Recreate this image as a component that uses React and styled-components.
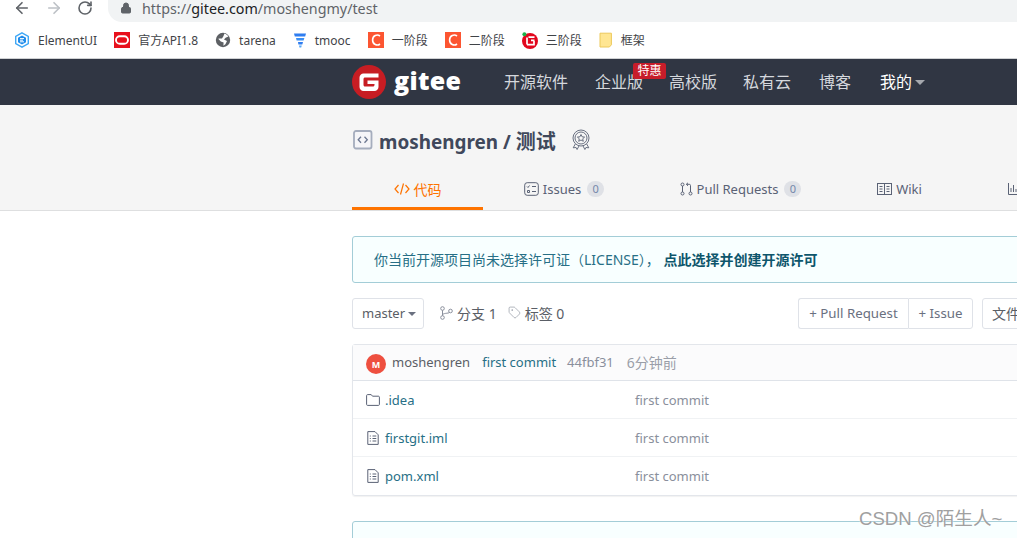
import React from "react";
import styled, { createGlobalStyle } from "styled-components";
import { ArrowLeft, ArrowRight, RotateCw, Lock, Tag } from "lucide-react";

const FONT = `"Noto Sans", "Noto Sans CJK SC", sans-serif`;

const Global = createGlobalStyle`
  html, body { margin: 0; padding: 0; background: #fff; }
  body { font-family: ${FONT}; overflow: hidden; }
  * { box-sizing: border-box; }
`;

const Page = styled.div`
  position: relative;
  width: 1017px;
  height: 538px;
  overflow: hidden;
  background: #fff;
`;

const Toolbar = styled.div`
  display: flex;
  align-items: center;
  height: 22px;
  padding: 0 0 6px 13px;
`;
const NavIcons = styled.div`
  display: flex;
  align-items: center;
  gap: 14px;
  width: 95px;
  flex: none;
  svg { display: block; }
`;
const UrlPill = styled.div`
  display: flex;
  align-items: center;
  flex: 1;
  height: 22px;
  margin-bottom: -6px;
  padding: 0 0 6px 12px;
  gap: 10px;
  background: #f1f3f4;
  border-radius: 0 0 0 14px;
`;
const UrlText = styled.div`
  font-size: 14.3px;
  line-height: 15px;
  color: #5f6368;
  white-space: nowrap;
  b { font-weight: 400; color: #202124; }
`;

const Bookmarks = styled.div`
  display: flex;
  align-items: center;
  height: 37px;
  padding-left: 14px;
  border-bottom: 1px solid #d0d2d4;
`;
const Bookmark = styled.div`
  display: flex;
  align-items: center;
  gap: 8px;
  margin-right: 17px;
  font-size: 12px;
  color: #3f4347;
  white-space: nowrap;
  svg { display: block; flex: none; }
`;

const TopNav = styled.nav`
  display: flex;
  align-items: center;
  height: 46px;
  padding-left: 352px;
  background: #303643;
`;
const LogoWord = styled.div`
  margin: 0 44px 0 8px;
  font-family: "Open Sans", sans-serif;
  font-size: 25px;
  line-height: 32px;
  font-weight: 800;
  color: #fff;
  letter-spacing: 0.3px;
  width: 66px;
  padding-bottom: 5px;
`;
const NavLinks = styled.div`
  display: flex;
  align-items: center;
  gap: 26px;
  padding-bottom: 2px;
`;
const NavLink = styled.a`
  position: relative;
  display: flex;
  align-items: center;
  gap: 3px;
  margin-left: ${(p) => p.$ml || 0}px;
  font-size: 16px;
  color: ${(p) => (p.$active ? "#fff" : "#d5d8dd")};
  white-space: nowrap;
`;
const Hot = styled.span`
  position: absolute;
  left: 38px;
  top: -6px;
  width: 33px;
  height: 16px;
  background: #c71d2a;
  border-radius: 2px;
  color: #fff;
  font-size: 12px;
  line-height: 16px;
  text-align: center;
`;
const Caret = styled.i`
  display: inline-block;
  width: 0;
  height: 0;
  border-left: ${(p) => p.$size || 5}px solid transparent;
  border-right: ${(p) => p.$size || 5}px solid transparent;
  border-top: ${(p) => p.$size || 5}px solid ${(p) => p.$color || "#a5a8ae"};
  margin-top: 2px;
`;

const RepoHeader = styled.header`
  height: 106px;
  padding: 22px 0 0 352px;
  background: #f5f5f5;
  border-bottom: 1px solid #dedfe0;
`;
const RepoTitle = styled.div`
  display: flex;
  align-items: center;
  height: 26px;
  gap: 6px;
  padding-left: 1px;
  font-size: 18.9px;
  font-weight: 700;
  color: #40485b;
  white-space: nowrap;
  svg { display: block; flex: none; }
`;
const TitleCjk = styled.span`
  font-size: 20px;
`;
const TitleBadge = styled.span`
  display: flex;
  margin-left: 9px;
`;
const Tabs = styled.div`
  display: flex;
  height: 57px;
`;
const TabItem = styled.a`
  display: flex;
  align-items: center;
  justify-content: center;
  gap: 4px;
  height: 57px;
  width: ${(p) => p.$w}px;
  flex: none;
  font-size: ${(p) => (p.$active ? 14 : 13)}px;
  padding-top: 17px;
  color: ${(p) => (p.$active ? "#fe7300" : "#5a6275")};
  border-bottom: 3px solid ${(p) => (p.$active ? "#fe7300" : "transparent")};
  white-space: nowrap;
  svg { display: block; flex: none; }
`;
const Count = styled.span`
  display: inline-block;
  width: 17px;
  height: 16px;
  margin-left: 2px;
  border-radius: 8px;
  background: #dfe1e6;
  color: #7488aa;
  font-size: 11px;
  line-height: 16px;
  text-align: center;
`;

const Main = styled.main`
  width: 1000px;
  margin-left: 352px;
  padding-top: 25px;
`;
const Alert = styled.div`
  height: 47px;
  padding: 0 0 1px 21px;
  display: flex;
  align-items: center;
  font-size: 14px;
  color: #276f86;
  white-space: nowrap;
  background: #f8ffff;
  border: 1px solid #a3cdd7;
  border-radius: 3px;
  b { font-weight: 700; color: #0e566c; }
`;
const Tools = styled.div`
  display: flex;
  align-items: center;
  margin-top: 15px;
  height: 31px;
`;
const ToolsLeft = styled.div`
  display: flex;
  align-items: center;
  width: 446px;
  flex: none;
`;
const Btn = styled.div`
  display: flex;
  align-items: center;
  gap: 3px;
  height: 31px;
  padding: 0 7px 2px 9px;
  font-size: 13px;
  color: #5a5e66;
  background: #fff;
  border: 1px solid #dfe2e8;
  border-radius: 3px;
  white-space: nowrap;
`;
const BtnGroup = styled.div`
  display: flex;
  margin-right: 9px;
  ${Btn} { justify-content: center; padding: 0 0 2px; color: #6a7080; font-size: 13.3px; }
  ${Btn}:first-child { width: 110px; border-radius: 3px 0 0 3px; border-right: 0; }
  ${Btn}:last-child { width: 65px; border-radius: 0 3px 3px 0; }
`;
const FileBtn = styled(Btn)`
  font-size: 14px;
`;
const Stat = styled.div`
  display: flex;
  align-items: center;
  gap: 4px;
  height: 31px;
  padding-bottom: 2px;
  margin-left: ${(p) => p.$ml}px;
  font-size: 14px;
  color: #5a5e66;
  white-space: nowrap;
  svg { display: block; }
`;

const FileBox = styled.section`
  margin-top: 15px;
  border: 1px solid #e3e6eb;
  border-radius: 3px;
  box-shadow: 0 1px 1px rgba(34, 36, 38, 0.06);
`;
const CommitRow = styled.div`
  display: flex;
  align-items: center;
  height: 36px;
  padding: 0 0 2px 13px;
  background: #fbfbfc;
  border-bottom: 1px solid #dfe3e9;
  font-size: 13px;
  white-space: nowrap;
`;
const Avatar = styled.span`
  width: 20px;
  height: 20px;
  margin: 4px 6px 0 0;
  border-radius: 50%;
  background: #ee4f3f;
  color: #fff;
  font-size: 9px;
  font-weight: 700;
  line-height: 21px;
  text-align: center;
`;
const CommitPart = styled.span`
  margin-right: ${(p) => p.$mr || 0}px;
  font-size: ${(p) => p.$size || 13}px;
  color: ${(p) => p.$color};
`;
const FileRow = styled.div`
  display: flex;
  align-items: center;
  height: 38px;
  padding-left: 13px;
  font-size: 13px;
  border-bottom: 1px solid #f0f2f4;
  &:last-child { border-bottom: 0; }
`;
const FileName = styled.a`
  display: flex;
  align-items: center;
  gap: 5px;
  width: 269px;
  flex: none;
  color: #276f86;
  svg { display: block; flex: none; }
`;
const FileMsg = styled.span`
  color: #8a8f9c;
`;
const AlertLower = styled(Alert)`
  margin-top: 25px;
`;

const Watermark = styled.div`
  position: absolute;
  left: 859px;
  top: 506px;
  font-family: "Liberation Sans", "Noto Sans CJK SC", sans-serif;
  font-size: 18.6px;
  line-height: 26px;
  color: #a0a0a0;
  white-space: nowrap;
  text-shadow: 0 0 2px #fff;
`;

const ElementIcon = () => (
  <svg width="16" height="16" viewBox="0 0 16 16">
    <path d="M8 .8 14.300 4.400v7.200L8 15.200 1.700 11.600V4.400z" fill="#fff" stroke="#3fa7f5" strokeWidth="1.400" />
    <path d="M8 3.400 12 5.700v4.600L8 12.600 4 10.300V5.700z" fill="#1f8ceb" />
    <path d="M6 6.600h4M6 8.200h3M6 9.800h4" stroke="#fff" strokeWidth="1" />
  </svg>
);
const OracleIcon = () => (
  <svg width="16" height="16" viewBox="0 0 16 16">
    <rect width="16" height="16" fill="#e8101c" />
    <rect x="2" y="4.200" width="12" height="7.600" rx="3.800" fill="none" stroke="#fff" strokeWidth="1.900" />
  </svg>
);
const GlobeIcon = () => (
  <svg width="16" height="16" viewBox="0 0 16 16">
    <circle cx="8" cy="8" r="7.200" fill="#5d6064" />
    <path d="M9.500 1.600c1.600.5 3 1.600 3.900 3L10.600 5.800 9 7.600l3 1.400-1.600 3.200-2 1.600.2-3.400-2.800-1-2.600-2.600 1.600-.4 2.200.2 1.400-2.400z" fill="#fff" />
  </svg>
);
const TmoocIcon = () => (
  <svg width="14" height="16" viewBox="0 0 14 16">
    <path d="M1 1.500h12l-.8 3H1.800z" fill="#2f7df0" />
    <path d="M3 6h8.400l-.8 2.600H3.600z" fill="#3a8ff5" />
    <path d="M5 10h5l-.7 2.400H5.400z" fill="#2f7df0" />
    <path d="M6 13.400h2.800l-.6 2H6.400z" fill="#55a6f7" />
  </svg>
);
const CIcon = () => (
  <svg width="16" height="16" viewBox="0 0 16 16">
    <rect width="16" height="16" fill="#fc5531" />
    <path d="M12 4C9.200 1.800 4.600 3.400 4.600 8s4.600 6.200 7.400 4" fill="none" stroke="#fff" strokeWidth="1.600" />
  </svg>
);
const TeduIcon = () => (
  <svg width="16" height="17" viewBox="0 0 16 17">
    <circle cx="8" cy="9" r="8" fill="#e2071d" />
    <circle cx="2.400" cy="2.200" r="2" fill="#19b34a" />
    <path d="M6.500 5.200h6M12.500 8.400H9M5 5.400v7M5 12.600h7V9" fill="none" stroke="#fff" strokeWidth="1.700" />
  </svg>
);
const NoteIcon = () => (
  <svg width="14" height="16" viewBox="0 0 14 16">
    <path d="M1 1.200h11.400v11.600l-2 2.200H1z" fill="#ffe692" stroke="#ecc95a" strokeWidth="1" />
  </svg>
);
const GiteeLogo = () => (
  <svg width="34" height="34" viewBox="0 0 34 34">
    <circle cx="17" cy="17" r="17" fill="#c71d23" />
    <path d="M11.500 8.500h15v4H13c-.8 0-1.500.7-1.500 1.500v6c0 .8.7 1.500 1.500 1.500h8c.8 0 1.500-.7 1.500-1.500v-1h-7v-3.500h11v6.500c0 2.200-1.800 4-4 4H11.500c-2.200 0-4-1.800-4-4V12.500c0-2.200 1.800-4 4-4z" fill="#fff" />
  </svg>
);
const RepoIcon = () => (
  <svg width="20" height="20" viewBox="0 0 20 20" fill="none">
    <rect x="1" y="1" width="17.500" height="17.500" rx="2" fill="#f5f5f8" stroke="#a5adbd" strokeWidth="1.800" />
    <path d="M8 6.700 5.200 9.700 8 12.700M11.500 6.700l2.800 3-2.800 3" stroke="#6d7891" strokeWidth="1.300" />
  </svg>
);
const AwardIcon = () => (
  <svg width="20" height="22" viewBox="0 0 20 22" fill="none" stroke="#5a6275" strokeWidth="0.900">
    <circle cx="10" cy="9" r="8" />
    <circle cx="10" cy="9" r="6" />
    <path d="M10 5.500l1.100 2.300 2.500.3-1.900 1.700.6 2.500-2.300-1.300-2.300 1.300.6-2.500-1.900-1.700 2.500-.3z" />
    <path d="M4.300 15 2.200 18.800l2.900-.3 1 2 1.900-3.600M15.700 15l2.100 3.800-2.900-.3-1 2-1.900-3.600" />
  </svg>
);
const CodeTabIcon = () => (
  <svg width="16" height="14" viewBox="0 0 16 14" fill="none" stroke="#fe7300" strokeWidth="1.200">
    <path d="M4.500 3 1 7l3.500 4M11.500 3 15 7l-3.500 4M9.500 1.500 6.500 12.500" />
  </svg>
);
const IssueIcon = () => (
  <svg width="15" height="14" viewBox="0 0 15 14" fill="none" stroke="#5a6275" strokeWidth="1">
    <rect x="0.700" y="0.700" width="13.600" height="12.600" rx="2.500" />
    <path d="M3 4.500l1 1 1.500-2M8 4.500h4M3.500 8.500h2v2h-2zM8 9.500h4" />
  </svg>
);
const PrIcon = () => (
  <svg width="13" height="14" viewBox="0 0 13 14" fill="none" stroke="#5a6275" strokeWidth="1">
    <circle cx="2.500" cy="2.500" r="1.500" />
    <circle cx="2.500" cy="11.500" r="1.500" />
    <circle cx="10.500" cy="11.500" r="1.500" />
    <path d="M2.500 4v6M10.500 10V3.500c0-.8-.5-1.200-1.200-1.200H6.500M8 .8 6.300 2.300 8 3.800" />
  </svg>
);
const WikiIcon = () => (
  <svg width="15" height="12" viewBox="0 0 15 12" fill="none" stroke="#5a6275" strokeWidth="1">
    <rect x="0.500" y="0.500" width="14" height="11" />
    <path d="M7.500 .5v11M2.500 3.500h3M2.500 6h3M2.500 8.500h3M9.500 3.500h3M9.500 6h3M9.500 8.500h3" />
  </svg>
);
const ChartIcon = () => (
  <svg width="12" height="13" viewBox="0 0 12 13" fill="none" stroke="#5a6275" strokeWidth="1">
    <path d="M.5 1v11.500H12M3 10V6M5.500 10V3M8 10V7M10.500 10V4.500" />
  </svg>
);
const BranchIcon = () => (
  <svg width="13" height="14" viewBox="0 0 13 14" fill="none" stroke="#8a8f9c" strokeWidth="1">
    <circle cx="2.500" cy="2.500" r="1.800" />
    <circle cx="2.500" cy="11.500" r="1.800" />
    <circle cx="10.500" cy="5" r="1.800" />
    <path d="M2.500 4.300v5.400M2.500 9c0-2 6-1.500 7-2.500" />
  </svg>
);
const FolderIcon = () => (
  <svg width="14" height="12" viewBox="0 0 14 12" fill="none" stroke="#5a6275" strokeWidth="1">
    <path d="M.6 1.500c0-.5.4-.9.9-.9h3.700l1.300 1.600h6c.5 0 .9.4.9.9v7.400c0 .5-.4.9-.9.9h-11c-.5 0-.9-.4-.9-.9z" />
  </svg>
);
const DocIcon = () => (
  <svg width="14" height="14" viewBox="0 0 14 14" fill="none" stroke="#5a6275" strokeWidth="1">
    <path d="M1.800.6h7.200l3.200 3.200v9.600H1.800z" />
    <path d="M3.800 5h1M6.500 5h3.800M3.800 7.500h1M6.500 7.500h3.800M3.800 10h1M6.500 10h3.800" />
  </svg>
);

const bookmarks = [
  [<ElementIcon key="i" />, "ElementUI"],
  [<OracleIcon key="i" />, "官方API1.8"],
  [<GlobeIcon key="i" />, "tarena"],
  [<TmoocIcon key="i" />, "tmooc"],
  [<CIcon key="i" />, "一阶段"],
  [<CIcon key="i" />, "二阶段"],
  [<TeduIcon key="i" />, "三阶段"],
  [<NoteIcon key="i" />, "框架"],
];
const files = [
  [<FolderIcon key="i" />, ".idea"],
  [<DocIcon key="i" />, "firstgit.iml"],
  [<DocIcon key="i" />, "pom.xml"],
];

export default function App() {
  return (
    <Page>
      <Global />
      <Toolbar>
        <NavIcons>
          <ArrowLeft size={18} color="#5f6368" strokeWidth={2.2} />
          <ArrowRight size={18} color="#bdc1c6" strokeWidth={2.2} />
          <RotateCw size={16} color="#5f6368" strokeWidth={2.4} />
        </NavIcons>
        <UrlPill>
          <Lock size={12} color="#5f6368" fill="#5f6368" strokeWidth={2} />
          <UrlText>https://<b>gitee.com</b>/moshengmy/test</UrlText>
        </UrlPill>
      </Toolbar>
      <Bookmarks>
        {bookmarks.map(([icon, label]) => (
          <Bookmark key={label}>{icon}{label}</Bookmark>
        ))}
      </Bookmarks>
      <TopNav>
        <GiteeLogo />
        <LogoWord>gitee</LogoWord>
        <NavLinks>
          <NavLink>开源软件</NavLink>
          <NavLink $ml={1}>企业版<Hot>特惠</Hot></NavLink>
          <NavLink>高校版</NavLink>
          <NavLink>私有云</NavLink>
          <NavLink $ml={2}>博客</NavLink>
          <NavLink $ml={3} $active>我的<Caret $size={5} /></NavLink>
        </NavLinks>
      </TopNav>
      <RepoHeader>
        <RepoTitle>
          <RepoIcon />
          <span>moshengren / <TitleCjk>测试</TitleCjk></span>
          <TitleBadge><AwardIcon /></TitleBadge>
        </RepoTitle>
        <Tabs>
          <TabItem $w={131} $active><CodeTabIcon />代码</TabItem>
          <TabItem $w={162}><IssueIcon />Issues <Count>0</Count></TabItem>
          <TabItem $w={191}><PrIcon />Pull Requests <Count>0</Count></TabItem>
          <TabItem $w={127}><WikiIcon />Wiki</TabItem>
          <TabItem $w={132}><ChartIcon />统计</TabItem>
        </Tabs>
      </RepoHeader>
      <Main>
        <Alert>你当前开源项目尚未选择许可证（LICENSE），&nbsp;<b>点此选择并创建开源许可</b></Alert>
        <Tools>
          <ToolsLeft>
            <Btn>master<Caret $size={4} $color="#6a7080" /></Btn>
            <Stat $ml={16}><BranchIcon />分支 1</Stat>
            <Stat $ml={11}><Tag size={13} color="#8a8f9c" strokeWidth={1.2} />标签 0</Stat>
          </ToolsLeft>
          <BtnGroup>
            <Btn>+ Pull Request</Btn>
            <Btn>+ Issue</Btn>
          </BtnGroup>
          <FileBtn>文件</FileBtn>
        </Tools>
        <FileBox>
          <CommitRow>
            <Avatar>M</Avatar>
            <CommitPart $mr={12} $color="#5a5e66">moshengren</CommitPart>
            <CommitPart $mr={11} $color="#276f86">first commit</CommitPart>
            <CommitPart $mr={13} $color="#8a8f9c">44fbf31</CommitPart>
            <CommitPart $size={14} $color="#9a9ea8">6分钟前</CommitPart>
          </CommitRow>
          {files.map(([icon, name]) => (
            <FileRow key={name}>
              <FileName>{icon}{name}</FileName>
              <FileMsg>first commit</FileMsg>
            </FileRow>
          ))}
        </FileBox>
        <AlertLower />
      </Main>
      <Watermark>CSDN @陌生人~</Watermark>
    </Page>
  );
}
